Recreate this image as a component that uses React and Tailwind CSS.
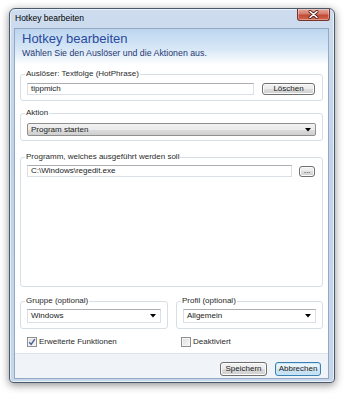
import React from "react";

const Arrow = () => (
  <svg width="6" height="4" viewBox="0 0 6 4" className="shrink-0">
    <path d="M0 0 L6 0 L3 3.5 Z" fill="#000" />
  </svg>
);

const TextBox = ({ value, className = "" }) => (
  <div
    className={`h-[12px] flex items-center px-[3px] bg-white border border-[#dbdfe6] border-t-[#abadb3] text-[8px] leading-none text-[#222] whitespace-nowrap ${className}`}
  >
    {value}
  </div>
);

const Button = ({ children, className = "", isDefault }) => (
  <div
    className={`flex items-center justify-center rounded-[3px] border text-[8px] leading-none text-[#222] ${
      isDefault
        ? "border-[#3c7fb1] bg-[linear-gradient(#eef7fd_0%,#e3f1fb_50%,#cfe6f6_50%,#c1def3_100%)] shadow-[inset_0_0_0_1px_#c8e6f9]"
        : "border-[#707070] bg-[linear-gradient(#f2f2f2_0%,#ebebeb_50%,#dddddd_50%,#cfcfcf_100%)] shadow-[inset_0_0_0_1px_#fbfbfb]"
    } ${className}`}
  >
    {children}
  </div>
);

const Combo = ({ value, className = "" }) => (
  <div
    className={`h-[14px] flex items-center justify-between pl-[3px] pr-[4px] bg-white border border-[#dbdfe6] border-t-[#abadb3] text-[8px] leading-none text-[#222] ${className}`}
  >
    <span>{value}</span>
    <Arrow />
  </div>
);

const Group = ({ label, className = "", children }) => (
  <fieldset className={`border border-[#d5dfe5] rounded-[3px] px-[6px] ${className}`}>
    <legend className="ml-[-2px] px-[1px] text-[8px] leading-[12px] text-[#2a2a2a]">{label}</legend>
    {children}
  </fieldset>
);

const Check = ({ checked, label, className = "" }) => (
  <div className={`flex items-center gap-[2px] h-[12px] ${className}`}>
    <div className="w-[10px] h-[10px] border border-[#8e8f8f] bg-[linear-gradient(135deg,#dcdcdc,#f8f8f8)] shadow-[inset_0_0_0_1px_#f4f4f4] flex items-center justify-center">
      {checked && (
        <svg width="8" height="8" viewBox="0 0 8 8">
          <path d="M1.2 4.2 L3.2 6.4 L6.8 1.2" fill="none" stroke="#4a5f97" strokeWidth="1.4" />
        </svg>
      )}
    </div>
    <span className="text-[8px] leading-none text-[#2a2a2a]">{label}</span>
  </div>
);

export default function App() {
  return (
    <div className="w-[346px] h-[400px] bg-white pt-[8px] pl-[9px] overflow-hidden font-['Liberation_Sans',Arial,sans-serif]">
      {/* WINDOW */}
      <div className="w-[326px] h-[375px] flex flex-col rounded-t-[6px] rounded-b-[4px] border border-[#4a5a6d] bg-[linear-gradient(#cddcee,#c0d3e8_40%,#c6d7eb)] shadow-[0_2px_9px_rgba(0,0,0,0.45),inset_0_0_0_1px_rgba(255,255,255,0.6)]">
        {/* TITLE BAR */}
        <div className="h-[19px] flex items-start justify-between">
          <span className="pl-[5px] pt-[4px] text-[8.5px] leading-[10px] text-black">Hotkey bearbeiten</span>
          <div className="mr-[4px] w-[33px] h-[12px] rounded-b-[3px] border border-t-0 border-[#7a3127] bg-[linear-gradient(#e6a89b,#d37c6b_45%,#c24a35_55%,#cf6650)] shadow-[inset_0_0_0_1px_rgba(255,255,255,0.35)] flex items-center justify-center">
            <svg width="11" height="9" viewBox="0 0 11 9">
              <path d="M2 1.5 L9 7.5 M9 1.5 L2 7.5" stroke="#4a1c14" strokeWidth="3" strokeLinecap="round" />
              <path d="M2 1.5 L9 7.5 M9 1.5 L2 7.5" stroke="#ffffff" strokeWidth="1.6" strokeLinecap="round" />
            </svg>
          </div>
        </div>

        {/* CLIENT */}
        <div className="ml-[4px] mr-[5px] h-[351px] flex flex-col bg-white border border-[#93a9c3]">
          {/* HEADER */}
          <div className="h-[36px] pl-[7px] pt-[3px] bg-[linear-gradient(#bcd6ef,#d7e7f6_55%,#ffffff)]">
            <p className="text-[13px] leading-[14px] text-[#2a4a9e]">Hotkey bearbeiten</p>
            <p className="mt-[1px] text-[8.8px] leading-[12px] text-[#1f3873]">Wählen Sie den Auslöser und die Aktionen aus.</p>
          </div>

          <Group label="Auslöser: Textfolge (HotPhrase)" className="mx-[5px] mt-[3px] pt-[3px] pb-[5px]">
            <div className="flex items-center gap-[8px]">
              <TextBox value="tippmich" className="w-[227px]" />
              <Button className="w-[53px] h-[12px]">Löschen</Button>
            </div>
          </Group>

          <Group label="Aktion" className="mx-[5px] mt-[6px] pt-[4px] pb-[4px]">
            <div className="h-[13px] flex items-center justify-between pl-[3px] pr-[4px] rounded-[2px] border border-[#8e8f8f] bg-[linear-gradient(#f2f2f2_0%,#ebebeb_50%,#dddddd_50%,#cfcfcf_100%)] text-[8px] leading-none text-[#222]">
              <span>Program starten</span>
              <Arrow />
            </div>
          </Group>

          <Group label="Programm, welches ausgeführt werden soll" className="mx-[5px] mt-[10px] pt-[2px] pb-[109px]">
            <div className="flex items-center gap-[7px]">
              <TextBox value={"C:\\Windows\\regedit.exe"} className="w-[265px]" />
              <Button className="w-[16px] h-[11px]">...</Button>
            </div>
          </Group>

          <div className="mx-[5px] mt-[8px] flex gap-[8px]">
            <Group label="Gruppe (optional)" className="w-[148px] pt-[2px] pb-[5px]">
              <Combo value="Windows" />
            </Group>
            <Group label="Profil (optional)" className="flex-1 pt-[2px] pb-[5px]">
              <Combo value="Allgemein" />
            </Group>
          </div>

          <div className="mt-[7px] flex">
            <Check checked label="Erweiterte Funktionen" className="ml-[12px] w-[154px]" />
            <Check label="Deaktiviert" />
          </div>

          {/* FOOTER */}
          <div className="mt-auto h-[25px] flex justify-end items-start gap-[8px] pt-[8px] pr-[7px] border-t border-[#dfe5ec] bg-[#f0f3f8]">
            <Button className="w-[47px] h-[14px]">Speichern</Button>
            <Button isDefault className="w-[46px] h-[14px]">Abbrechen</Button>
          </div>
        </div>
      </div>
    </div>
  );
}
